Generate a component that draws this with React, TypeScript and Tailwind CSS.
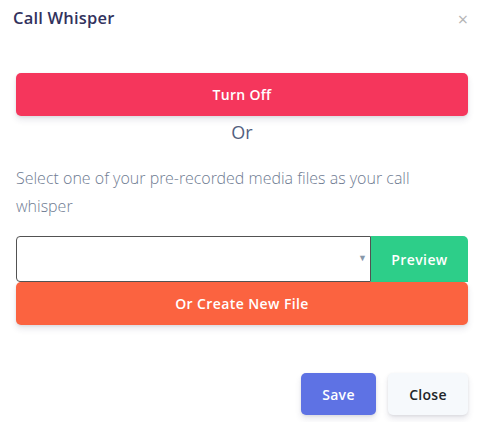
import React from 'react';

export default function App() {
  return (
    <div
      className="w-[488px] h-[422px] bg-white relative overflow-hidden"
      style={{ fontFamily: '"Open Sans", sans-serif' }}
    >
      {/* Header */}
      <div className="flex items-start justify-between pl-[13px] pr-[20px] pt-[7px]">
        <h5 className="text-[16.5px] font-semibold text-[#32325d] leading-[22px] tracking-[0.2px]">Call Whisper</h5>
        <button className="text-[#b5b5b5] text-[18px] leading-[18px] mt-[3px]">×</button>
      </div>

      {/* Body */}
      <div className="pl-[16px] pr-[20px] pt-[44px]">
        <button className="w-full h-[43px] rounded-[5px] bg-[#f5365c] text-white text-[14px] font-semibold tracking-[0.3px] shadow-[0_4px_6px_rgba(50,50,93,0.11),0_1px_3px_rgba(0,0,0,0.08)]">
          Turn Off
        </button>
        <div className="text-center text-[18px] text-[#525f7f] leading-[30px] mt-[1px]">Or</div>

        <p
          className="mt-[17px] text-[16px] font-light text-[#6f7c92] leading-[28px] pr-[30px]"
          style={{ fontFamily: '"Open Sans Light", "Open Sans", sans-serif' }}
        >
          Select one of your pre-recorded media files as your call whisper
        </p>

        <div className="mt-[16px] flex h-[46px]">
          <div className="flex-1 relative border-[1.5px] border-[#525252] rounded-l-[4px] bg-white">
            <span className="absolute right-[3px] top-[14px] text-[#8898aa] text-[9px]">▼</span>
          </div>
          <button className="w-[97px] bg-[#2dce89] text-white text-[14px] font-semibold rounded-tr-[5px] tracking-[0.4px]">
            Preview
          </button>
        </div>
        <button className="w-full h-[43px] rounded-[5px] bg-[#fb6340] text-white text-[14px] font-semibold tracking-[0.4px] shadow-[0_4px_6px_rgba(50,50,93,0.11),0_1px_3px_rgba(0,0,0,0.08)]">
          Or Create New File
        </button>
      </div>

      {/* Footer */}
      <div className="flex justify-end gap-[12px] px-[20px] mt-[48px]">
        <button className="w-[75px] h-[42px] rounded-[5px] bg-[#5e72e4] text-white text-[14px] font-semibold tracking-[0.3px] shadow-[0_4px_6px_rgba(50,50,93,0.11),0_1px_3px_rgba(0,0,0,0.08)]">
          Save
        </button>
        <button className="w-[80px] h-[42px] rounded-[5px] bg-[#f6f9fc] text-[#212529] text-[14px] font-semibold tracking-[0.3px] shadow-[0_4px_6px_rgba(50,50,93,0.11),0_1px_3px_rgba(0,0,0,0.08)]">
          Close
        </button>
      </div>
    </div>
  );
}
